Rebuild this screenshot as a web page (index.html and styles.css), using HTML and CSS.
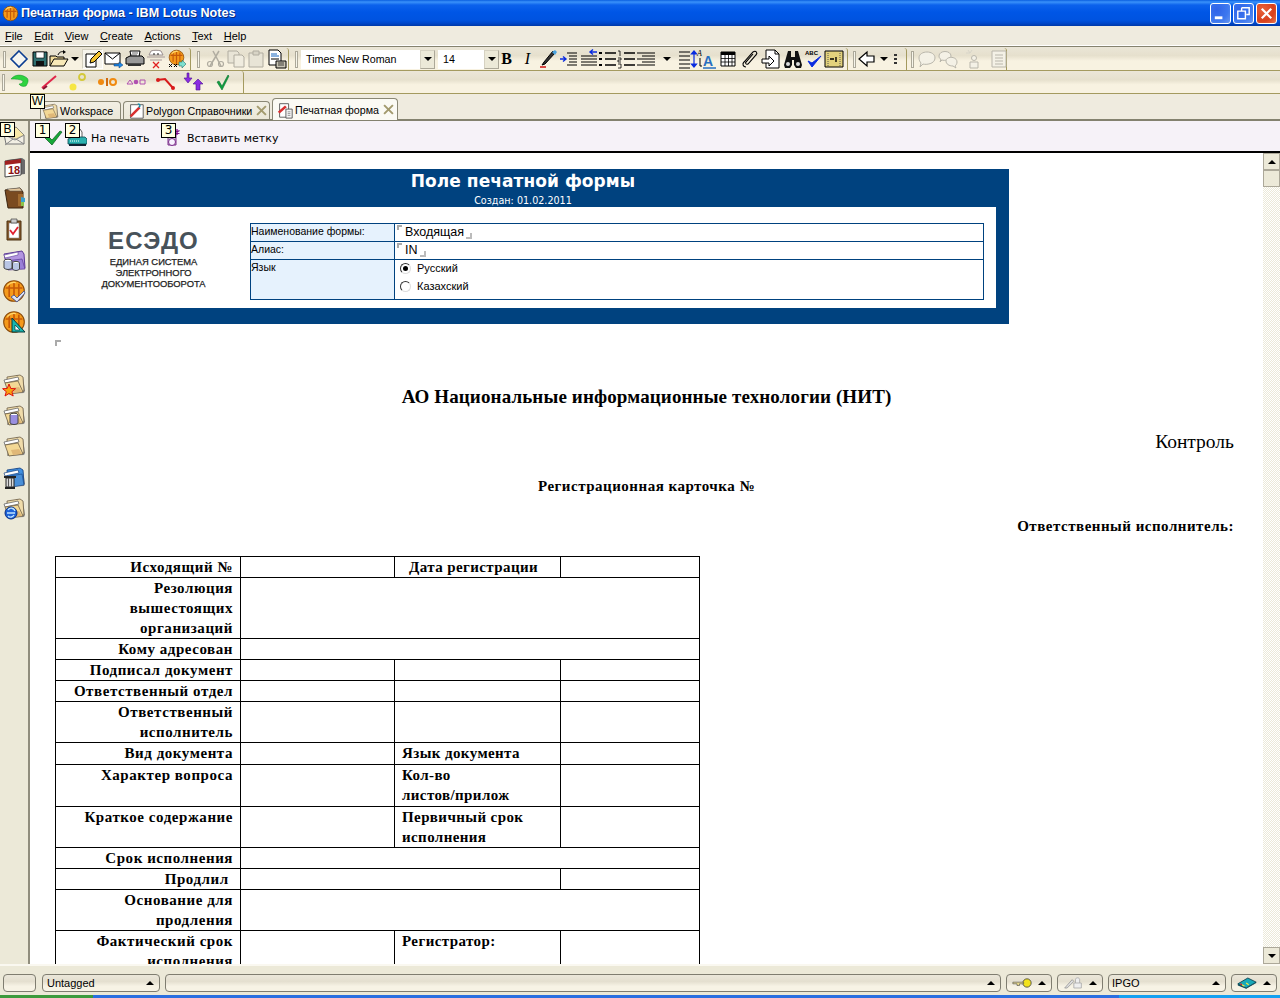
FILE: index.html
```html
<!DOCTYPE html>
<html lang="ru">
<head>
<meta charset="utf-8">
<title>Печатная форма - IBM Lotus Notes</title>
<link rel="stylesheet" href="styles.css">
</head>
<body>
<svg class="defs" aria-hidden="true">
  <symbol id="globe" viewBox="0 0 20 20">
    <circle cx="10" cy="10" r="8.6" fill="#f59a1b" stroke="#8a4a08" stroke-width=".9"/>
    <path d="M3 7.5h14M6 4v11M10 2.5v15M14 4v11" stroke="#c65a08" stroke-width="1.4" fill="none"/>
    <path d="M4.5 5.5a7 7 0 0 1 7-2.5" stroke="#ffd66b" stroke-width="1.2" fill="none"/>
  </symbol>
  <symbol id="folder" viewBox="0 0 24 24">
    <path d="M5 22l17-1 1-2-2-14-6-2-3 2z" fill="#8b8b8b"/>
    <path d="M5 5l13-2 3 2 1 14-16 2z" fill="#f0dcaa" stroke="#6f6048" stroke-width=".8"/>
    <path d="M2 8l14-3 1 3-14 3z" fill="#fff" stroke="#555" stroke-width=".7"/>
    <path d="M3 11l13-2 5 11-14 2z" fill="#f3d895" stroke="#6f6048" stroke-width=".8"/>
    <path d="M9 16l8-1 3 5-9 1z" fill="#e0b878"/>
  </symbol>
  <symbol id="check" viewBox="0 0 20 20">
    <path d="M2 10l3-2 4 4 8-9 2 1-10 13z" fill="#17a83a" stroke="#0a5a1e" stroke-width=".7"/>
  </symbol>
</svg>

<div class="window">
  <header class="titlebar">
    <svg class="ti-globe"><use href="#globe"/></svg>
    <span class="title">Печатная форма - IBM Lotus Notes</span>
    <span class="winbtns">
      <span class="winbtn"><svg viewBox="0 0 20 20"><path d="M4 13h8v3H4z" fill="#fff"/></svg></span>
      <span class="winbtn"><svg viewBox="0 0 20 20"><path d="M8 4h8v7h-3M8 4v3M4 7.500h8v8H4z" fill="none" stroke="#fff" stroke-width="1.500"/></svg></span>
      <span class="winbtn close"><svg viewBox="0 0 20 20"><path d="M5 5l10 10M15 5L5 15" stroke="#fff" stroke-width="2.300"/></svg></span>
    </span>
  </header>

  <nav class="menubar">
    <span class="m"><u>F</u>ile</span><span class="m"><u>E</u>dit</span><span class="m"><u>V</u>iew</span><span class="m"><u>C</u>reate</span><span class="m"><u>A</u>ctions</span><span class="m"><u>T</u>ext</span><span class="m"><u>H</u>elp</span>
  </nav>

  <div class="toolrow first">
    <div class="group g1">
      <i class="grip"></i>
      <span class="ib w21"><svg viewBox="0 0 20 20"><path d="M10 2l8 8-8 8-8-8z" fill="#f5f5f0" stroke="#0b3d91" stroke-width="1.600"/></svg></span>
      <span class="ib w21"><svg viewBox="0 0 20 20"><path d="M3 3h14v14H3z" fill="#2f6f6f" stroke="#000"/><path d="M6 3h8v6H6z" fill="#fff" stroke="#000" stroke-width=".6"/><path d="M6 12h8v5H6z" fill="#111"/></svg></span>
      <span class="ib w18"><svg viewBox="0 0 20 20"><path d="M1 17V7h6l1 1h7v2" fill="#f3dd9b" stroke="#000"/><path d="M1 17l4-7h14l-4 7z" fill="#f8e9b8" stroke="#000"/><path d="M9 6c1-3 4-4 6-3" fill="none" stroke="#000"/><path d="M14 1l3 2-3 2z"/></svg></span>
      <span class="ib arrow w14"><b class="tri"></b></span>
      <span class="ib w21 pressed"><svg viewBox="0 0 20 20"><path d="M3 5h10v13H3z" fill="#fff" stroke="#000"/><path d="M7 14l1-4 8-8 3 3-8 8z" fill="#f4c430" stroke="#000"/></svg></span>
      <span class="ib w21"><svg viewBox="0 0 20 20"><path d="M1 4h15v11H1z" fill="#fff" stroke="#000"/><path d="M1 4l7.500 6L16 4" fill="none" stroke="#000"/><path d="M10 15h5v-2l4 3-4 3v-2h-5z" fill="#1e88e5" stroke="#0a3a7a" stroke-width=".5"/></svg></span>
      <span class="ib w21"><svg viewBox="0 0 20 20"><path d="M5 2h10l-1 6H6z" fill="#fff" stroke="#000"/><path d="M1 9l4-2h12l2 2v6H1z" fill="#999" stroke="#000"/><path d="M3 15h13v2H3z" fill="#333"/><path d="M7 4h6M6 6h6" stroke="#000" stroke-width=".6"/></svg></span>
      <span class="ib w21"><svg viewBox="0 0 20 20"><path d="M5 2c2-1 8-1 10 0l2 4H3z" fill="#fff" stroke="#9a8f8f"/><path d="M1 8h18M4 11h12" stroke="#a89a9a"/><circle cx="8" cy="5" r=".8"/><circle cx="12" cy="5" r=".8"/><path d="M7 13l6 6M13 13l-6 6" stroke="#e02020" stroke-width="1.300"/></svg></span>
      <span class="ib w21"><svg viewBox="0 0 20 20"><use href="#globe" width="17" height="17" x="1"/><path d="M2 15l3 3M5 15l-3 3M7 15l3 3M10 15l-3 3" stroke="#000"/><path d="M12 13h3v-2l4 4-4 4v-2h-3z" fill="#7fe0d0" stroke="#0a5a5a" stroke-width=".5"/></svg></span>
    </div>
    <div class="group g2">
      <i class="grip"></i>
      <span class="ib w20"><svg viewBox="0 0 20 20"><path d="M4 17L13 2M15 17L7 2" stroke="#b0aca0" stroke-width="1.500"/><circle cx="4" cy="15" r="2.500" fill="none" stroke="#b0aca0" stroke-width="1.200"/><circle cx="15" cy="15" r="2.500" fill="none" stroke="#b0aca0" stroke-width="1.200"/></svg></span>
      <span class="ib w20"><svg viewBox="0 0 20 20"><path d="M2 2h9l2 2v10H2z" fill="#e8e4d6" stroke="#b0aca0"/><path d="M8 6h8l2 2v10H8z" fill="#f0ecdf" stroke="#b0aca0"/></svg></span>
      <span class="ib w20"><svg viewBox="0 0 20 20"><path d="M3 4h14v14H3z" fill="#e8e4d6" stroke="#b0aca0"/><path d="M7 2h6v4H7z" fill="#d8d4c6" stroke="#b0aca0"/></svg></span>
      <span class="ib w22"><svg viewBox="0 0 20 20"><path d="M2 1h9l3 3v12H2z" fill="#fff" stroke="#000"/><path d="M4 5h6M4 7h8" stroke="#1565c0"/><path d="M4 10h8" stroke="#000"/><path d="M9 12h10v7H9z" fill="#c9c5b6" stroke="#000"/><path d="M11 14h6M11 16h6" stroke="#000" stroke-width=".7"/></svg></span>
    </div>
    <div class="group g3">
      <i class="grip"></i>
      <span class="combo c-font"><span class="val">Times New Roman</span><span class="drop"><b class="tri"></b></span></span>
      <span class="combo c-size"><span class="val">14</span><span class="drop"><b class="tri"></b></span></span>
      <span class="ib w21 serif-b">B</span>
      <span class="ib w21 serif-i">I</span>
      <span class="ib w20"><svg viewBox="0 0 20 20"><path d="M6 13l-2 3 3-1 10-11-2-2z" fill="#333" stroke="#000"/><path d="M14 3l3-2 2 2-2 3z" fill="#4aa3df"/><path d="M2 18h6" stroke="#d01010" stroke-width="1.500"/></svg></span>
      <span class="ib w21"><svg viewBox="0 0 20 20"><path d="M8 4h10M10 7h8M10 10h8M10 13h8M8 16h10" stroke="#000" stroke-width="1.200"/><path d="M1 10h5M4 7.500l3 2.500-3 2.500" fill="none" stroke="#0a2be0" stroke-width="1.400"/></svg></span>
      <span class="ib w19"><svg viewBox="0 0 20 20"><path d="M2 7h16M2 10h16M2 13h16M2 16h16" stroke="#000" stroke-width="1.200"/><path d="M18 3h-7M14 .5L11 3l3 2.500" fill="none" stroke="#0a2be0" stroke-width="1.400"/></svg></span>
      <span class="ib w18"><svg viewBox="0 0 20 20"><path d="M8 4h11M8 10h11M8 16h11" stroke="#000" stroke-width="1.300"/><path d="M2 3h3v2H2zM2 9h3v2H2zM2 15h3v2H2z"/></svg></span>
      <span class="ib w19"><svg viewBox="0 0 20 20"><path d="M8 4h11M8 10h11M8 16h11" stroke="#000" stroke-width="1.300"/><path d="M2 2h2v5M2 9h3v2H2v2h3M2 15h3v4H2" fill="none" stroke="#000" stroke-width=".8"/></svg></span>
      <span class="ib w21"><svg viewBox="0 0 20 20"><path d="M1 4h18M6 7h13M1 10h18M6 13h13M1 16h18" stroke="#000" stroke-width="1.200"/></svg></span>
      <span class="ib w22 arrow"><b class="tri"></b></span>
      <span class="ib w19"><svg viewBox="0 0 20 20"><path d="M1 3h11M1 7h11M1 11h11M1 15h11M1 19h11" stroke="#000" stroke-width="1.200"/><path d="M16 3v14M13.500 5L16 2l2.500 3zM13.500 15l2.500 3 2.500-3z" fill="#0a2be0" stroke="#0a2be0" stroke-width="1.200"/></svg></span>
      <span class="ib w20"><svg viewBox="0 0 20 20"><text class="mini-a" x="0" y="7">A</text><text class="big-a" x="6" y="17">A</text><path d="M6 19h13" stroke="#2a6fc0" stroke-width="1.500"/><path d="M3 9v8h2" fill="none" stroke="#000"/></svg></span>
      <span class="ib w22"><svg viewBox="0 0 20 20"><path d="M3 3h14v14H3z" fill="#fff" stroke="#000"/><path d="M3 3h14v3H3z"/><path d="M3 9.500h14M3 13h14M7 3v14M10.500 3v14M14 3v14" stroke="#000" stroke-width=".8"/></svg></span>
      <span class="ib w21"><svg viewBox="0 0 20 20"><path d="M6 18c-3 0-4-3-2-5l9-10c3-2 5 1 3 3l-8 9c-2 1-3-1-2-2l7-8" fill="none" stroke="#000" stroke-width="1.100"/></svg></span>
      <span class="ib w22"><svg viewBox="0 0 20 20"><path d="M5 1h9l4 4v14H5z" fill="#fff" stroke="#000"/><path d="M14 1v4h4" fill="none" stroke="#000"/><path d="M1 10h7V7l5 5-5 5v-3H1z" fill="#fff" stroke="#000"/></svg></span>
      <span class="ib w21"><svg viewBox="0 0 20 20"><path d="M5 2h3v6h4V2h3l4 14-1 3h-5l-2-3V11H9v5l-2 3H2l-1-3z" fill="#111"/><circle cx="5" cy="15" r="2" fill="#ddd"/><circle cx="15" cy="15" r="2" fill="#ddd"/></svg></span>
      <span class="ib w21"><svg viewBox="0 0 20 20"><text class="abc" x="1" y="6">ABC</text><path d="M4 12l4 6L17 7l-9 7z" fill="#0a2be0" stroke="#0a2be0"/></svg></span>
      <span class="ib w19"><svg viewBox="0 0 20 20"><path d="M1 2h18v16H1z" fill="#e3d27c" stroke="#000"/><path d="M4 2v16M16 2v16" stroke="#555" stroke-dasharray="1 1"/><path d="M6 10h4M12 8v5" stroke="#000" stroke-width="1.400"/></svg></span>
    </div>
    <div class="group g4">
      <i class="grip"></i>
      <span class="ib w22 first-ib"><svg viewBox="0 0 20 20"><path d="M2 10l8-7v4h7v6h-7v4z" fill="#fff" stroke="#000" stroke-width="1.200"/></svg></span>
      <span class="ib w12 arrow"><b class="tri"></b></span>
      <span class="ib w10 dots"><b></b><b></b><b></b></span>
    </div>
    <div class="group g5">
      <i class="grip"></i>
      <span class="ib w21"><svg viewBox="0 0 20 20"><path d="M2 9c0-8 16-8 16 0 0 6-9 7-12 6l-3 3 1-4c-1-1-2-3-2-5z" fill="#f4f1e6" stroke="#b9b6ab"/></svg></span>
      <span class="ib w21"><svg viewBox="0 0 20 20"><path d="M1 7c0-6 12-6 12 0 0 4-7 5-9 4l-2 2 1-3c-1 0-2-1-2-3z" fill="#f4f1e6" stroke="#b9b6ab"/><path d="M8 12c0-5 11-5 11 1 0 2-1 3-2 4l1 2-3-2c-4 0-7-2-7-5z" fill="#f4f1e6" stroke="#b9b6ab"/></svg></span>
      <span class="ib w31"><svg viewBox="0 0 20 20"><circle cx="10" cy="9" r="2.500" fill="#f4f1e6" stroke="#b9b6ab"/><path d="M6 19v-6h8v6z" fill="#f4f1e6" stroke="#b9b6ab"/><path d="M4 1l2 3M8 1L6 4M2 4h4" stroke="#d8d5c9"/></svg></span>
      <span class="ib w20"><svg viewBox="0 0 20 20"><path d="M3 2h14v16H3z" fill="#f4f1e6" stroke="#b9b6ab"/><path d="M6 6h8M6 9h8M6 12h8M6 15h8" stroke="#b9b6ab"/></svg></span>
    </div>
    <div class="rest"></div>
  </div>

  <div class="toolrow second">
    <div class="group g-act">
      <i class="grip"></i>
      <span class="ib w29"><svg viewBox="0 0 20 20"><path d="M1 7c4-5 11-5 16-1 2 2 1 5-1 8-3 1-6 0-7-2 2 0 4-1 4-3-3-2-7-2-12-2z" fill="#2fd33f" stroke="#0b8f2a" stroke-width=".5"/></svg></span>
      <span class="ib w29"><svg viewBox="0 0 20 20"><path d="M3 16L17 4" stroke="#e0264a" stroke-width="2"/><path d="M4 17l4-3" stroke="#8a1030" stroke-width="2"/></svg></span>
      <span class="ib w29"><svg viewBox="0 0 20 20"><circle cx="5" cy="15" r="3.500" fill="#f6e644"/><circle cx="14" cy="5" r="3" fill="none" stroke="#d4c93a" stroke-width="1.800"/></svg></span>
      <span class="ib w29"><svg viewBox="0 0 20 20"><circle cx="4" cy="10" r="3" fill="#f08a10"/><path d="M9 6h2v8H9z" fill="#d06b10"/><circle cx="16" cy="10" r="3" fill="none" stroke="#f08a10" stroke-width="2"/></svg></span>
      <span class="ib w29"><svg viewBox="0 0 20 20"><path d="M1 12l3-4 3 4z" fill="none" stroke="#b050b0"/><circle cx="10" cy="10" r="2.300" fill="#b050b0"/><path d="M14 8h5v4h-5z" fill="none" stroke="#b050b0"/></svg></span>
      <span class="ib w29"><svg viewBox="0 0 20 20"><path d="M2 8l8-1 8 9" fill="none" stroke="#d81b1b" stroke-width="2"/><circle cx="3" cy="8" r="2" fill="#d81b1b"/><circle cx="18" cy="16" r="2" fill="#d81b1b"/></svg></span>
      <span class="ib w29"><svg viewBox="0 0 20 20"><path d="M5 1v5h3l-4 5-4-5h3V1zM12 18v-6H9l5-5 5 5h-3v6z" fill="#8a2be2" stroke="#4a1090" stroke-width=".6"/></svg></span>
      <span class="ib w29"><svg viewBox="0 0 20 20"><path d="M4 10l2-1 3 5 6-11 1 1-7 14z" fill="#10a040" stroke="#0a7030" stroke-width=".6"/></svg></span>
    </div>
    <div class="rest"></div>
  </div>

  <div class="tabstrip">
    <span class="tip tip-w">W</span>
    <div class="tab t-work"><svg class="tab-ico"><use href="#folder"/></svg><span>Workspace</span></div>
    <div class="tab t-poly"><svg class="tab-ico" viewBox="0 0 20 20"><path d="M4 3h14v15H4z" fill="#fff" stroke="#555"/><path d="M3 15L13 5l2 2L5 17z" fill="#d83030"/><path d="M12 2c3 0 3 3 1 4" fill="none" stroke="#1090b0" stroke-width="1.500"/></svg><span>Polygon Справочники</span><svg class="x" viewBox="0 0 10 10"><path d="M1 1l8 8M9 1l-8 8"/></svg></div>
    <div class="tab t-form"><svg class="tab-ico" viewBox="0 0 20 20"><path d="M4 3h10v15H4z" fill="#fff" stroke="#555"/><path d="M2 12L10 5l2 2-8 7z" fill="#d83030"/><path d="M11 9h7v10h-7z" fill="#f4f4f4" stroke="#555"/><path d="M13 12h3M13 14h3M13 16h3" stroke="#666" stroke-width=".7"/></svg><span>Печатная форма</span><svg class="x" viewBox="0 0 10 10"><path d="M1 1l8 8M9 1l-8 8"/></svg></div>
  </div>

  <div class="middle">
    <aside class="rail">
      <span class="tip tip-b">B</span>
      <span class="ri"><svg viewBox="0 0 24 24"><path d="M2 10L14 3l8 8v9H4z" fill="#f2efe4" stroke="#777"/><path d="M3 11l10 5 9-5M3 21l8-6M22 20l-8-5" fill="none" stroke="#888"/><path d="M14 3l8 8-8 4-9-4z" fill="#f8e9a8" stroke="#777" stroke-width=".6"/></svg></span>
      <span class="ri"><svg viewBox="0 0 24 24"><path d="M4 21l19-2V5L20 3 5 5z" fill="#6a6a6a"/><path d="M3 6l16-2v16L3 22z" fill="#fff" stroke="#444"/><path d="M3 6l16-2v4L3 10z" fill="#a02020"/><text class="cal" x="6" y="19">18</text></svg></span>
      <span class="ri"><svg viewBox="0 0 24 24"><path d="M3 4l15-2 3 4v16H6z" fill="#7a4a20" stroke="#3a2410"/><path d="M5 3l13-1 2 3H8z" fill="#e4c69a" stroke="#555" stroke-width=".5"/><path d="M16 8h5v12h-5z" fill="#a06a30"/><path d="M19 11l4 1v4l-4 1z" fill="#38a0d0"/><path d="M19 16h3v4h-3z" fill="#8bc34a"/></svg></span>
      <span class="ri"><svg viewBox="0 0 24 24"><path d="M5 4h14v19H5z" fill="#8a5a2a" stroke="#4a3010"/><path d="M7 6h10v15H7z" fill="#fff" stroke="#777" stroke-width=".5"/><path d="M9 2h6v4H9z" fill="#ccc" stroke="#444" stroke-width=".7"/><path d="M8 13l3 4 5-7" fill="none" stroke="#e02030" stroke-width="1.800"/></svg></span>
      <span class="ri"><svg viewBox="0 0 24 24"><path d="M2 6l18-3 2 3 1 14H5z" fill="#b295e0" stroke="#5b3a96"/><path d="M2 7l14-3v3L3 10z" fill="#fff" stroke="#5b3a96" stroke-width=".6"/><path d="M4 13l16-2 3 10-17 1z" fill="#9a80d8" stroke="#5b3a96" stroke-width=".7"/><ellipse cx="6" cy="13" rx="4" ry="1.800" fill="#fff" stroke="#444"/><path d="M2 13v7c2 2 6 2 8 0v-7" fill="#b9c6e5" stroke="#444"/><ellipse cx="14" cy="15" rx="3.500" ry="1.600" fill="#fff" stroke="#444"/><path d="M10.500 15v6c2 2 5 2 7 0v-6" fill="#b9c6e5" stroke="#444"/></svg></span>
      <span class="ri"><svg viewBox="0 0 24 24"><use href="#globe" width="24" height="24"/><path d="M9 18l3-2 3 3 7-7 1 2-8 9z" fill="#dce3f4" stroke="#3a4a8a" stroke-width=".8"/></svg></span>
      <span class="ri"><svg viewBox="0 0 24 24"><use href="#globe" width="24" height="24"/><path d="M10 8l13 14H10z" fill="#19b6b0" stroke="#083a3a"/><path d="M13 15l5 5h-5z" fill="#fff" stroke="#083a3a" stroke-width=".7"/></svg></span>
      <span class="rail-gap"></span>
      <span class="ri"><svg viewBox="0 0 24 24"><use href="#folder"/><path d="M7 12l1.800 4.500 4.800.2-3.700 3 1.300 4.300-4.200-2.500L3 24l1.300-4.300-3.700-3 4.600-.2z" fill="#f6a310" stroke="#e01010" stroke-width="1"/></svg></span>
      <span class="ri"><svg viewBox="0 0 24 24"><use href="#folder"/><ellipse cx="12" cy="12" rx="4" ry="1.800" fill="#fff" stroke="#444"/><path d="M8 12v8c2 2 6 2 8 0v-8" fill="#9a8fe0" stroke="#444"/></svg></span>
      <span class="ri"><svg viewBox="0 0 24 24"><use href="#folder"/></svg></span>
      <span class="ri"><svg viewBox="0 0 24 24"><path d="M5 22l17-1 1-2-2-14-6-2-3 2z" fill="#8b8b8b"/><path d="M5 5l13-2 3 2 1 14-16 2z" fill="#3f8fe0" stroke="#143f80" stroke-width=".8"/><path d="M2 8l14-3 1 3-14 3z" fill="#fff" stroke="#143f80" stroke-width=".7"/><path d="M8 11l12-2 2 11-12 2z" fill="#4a90d8" stroke="#143f80" stroke-width=".6"/><path d="M2 11h12v2H2zM3 22h10v2H3z" fill="#222"/><path d="M4 13h8v9H4z" fill="#d8d8d8" stroke="#222"/><path d="M6.500 13v9M9.500 13v9" stroke="#555"/></svg></span>
      <span class="ri"><svg viewBox="0 0 24 24"><use href="#folder"/><circle cx="9" cy="17" r="6" fill="#1d62d8" stroke="#0a2e80"/><path d="M5 17h8M6 14c2-3 6-2 7 1M6 20c2 2 5 1 6-1" fill="none" stroke="#bfe3ff" stroke-width="1.300"/></svg></span>
    </aside>

    <div class="content">
      <div class="actionbar">
        <span class="act a1"><span class="tip tip-n">1</span><svg class="act-ico"><use href="#check"/></svg></span>
        <span class="act a2"><span class="tip tip-n">2</span><svg class="act-ico" viewBox="0 0 20 20"><path d="M6 1h7l2 3v6H6z" fill="#fff" stroke="#333" stroke-width=".8"/><path d="M1 11l4-2h13l2 2v5H1z" fill="#2bb0b0" stroke="#0a4a50" stroke-width=".8"/><path d="M3 13h10" stroke="#fff" stroke-dasharray="1 1"/><path d="M2 16h17v2H2z" fill="#123"/></svg><span>На печать</span></span>
        <span class="act a3"><span class="tip tip-n">3</span><svg class="act-ico" viewBox="0 0 20 20"><path d="M6 5h8v12H6z" fill="#c9c5d8" stroke="#7a2a8a"/><circle cx="10" cy="14" r="3.500" fill="#f8f2ff" stroke="#7a2a8a"/><path d="M15 1v6M12.500 2.500l5 3M17.500 2.500l-5 3" stroke="#7a0a8a" stroke-width="1.300"/></svg><span>Вставить метку</span></span>
      </div>

      <div class="docarea">
        <main class="doc">
          <section class="banner">
            <h1>Поле печатной формы</h1>
            <p class="created">Создан: 01.02.2011</p>
            <div class="panel">
              <div class="logo">
                <div class="logo-mark">ЕСЭДО</div>
                <div class="logo-sub">ЕДИНАЯ СИСТЕМА<br>ЭЛЕКТРОННОГО<br>ДОКУМЕНТООБОРОТА</div>
              </div>
              <table class="meta">
                <tr class="r1"><th>Наименование формы:</th><td><i class="mk-a"></i><span class="fv">Входящая</span><i class="mk-b"></i></td></tr>
                <tr class="r2"><th>Алиас:</th><td><i class="mk-a"></i><span class="fv">IN</span><i class="mk-b"></i></td></tr>
                <tr class="r3"><th>Язык</th><td>
                  <div class="radio on"><i class="rd"></i>Русский</div>
                  <div class="radio"><i class="rd"></i>Казахский</div>
                </td></tr>
              </table>
            </div>
          </section>
          <i class="mk-a lone"></i>
          <h2 class="org">АО Национальные информационные технологии (НИТ)</h2>
          <p class="ctrl">Контроль</p>
          <h3 class="reg">Регистрационная карточка №</h3>
          <p class="resp">Ответственный исполнитель:</p>
          <table class="card">
            <colgroup><col class="c1"><col class="c2"><col class="c3"><col class="c4"></colgroup>
            <tr class="h21"><th>Исходящий №</th><td></td><td class="lab ind">Дата регистрации</td><td></td></tr>
            <tr class="h61"><th>Резолюция вышестоящих организаций</th><td colspan="3"></td></tr>
            <tr class="h21"><th>Кому адресован</th><td colspan="3"></td></tr>
            <tr class="h21"><th>Подписал документ</th><td></td><td></td><td></td></tr>
            <tr class="h21"><th>Ответственный отдел</th><td></td><td></td><td></td></tr>
            <tr class="h41"><th>Ответственный исполнитель</th><td></td><td></td><td></td></tr>
            <tr class="h22"><th>Вид документа</th><td></td><td class="lab">Язык документа</td><td></td></tr>
            <tr class="h42"><th>Характер вопроса</th><td></td><td class="lab">Кол-во<br>листов/прилож</td><td></td></tr>
            <tr class="h41"><th>Краткое содержание</th><td></td><td class="lab">Первичный срок исполнения</td><td></td></tr>
            <tr class="h21"><th>Срок исполнения</th><td colspan="3"></td></tr>
            <tr class="h21"><th>Продлил&nbsp;</th><td colspan="2"></td><td></td></tr>
            <tr class="h41"><th>Основание для продления</th><td colspan="3"></td></tr>
            <tr class="h41"><th>Фактический срок исполнения</th><td></td><td class="lab">Регистратор:</td><td></td></tr>
          </table>
        </main>
        <div class="scrollbar">
          <span class="sb-btn"><b class="tri up"></b></span>
          <span class="sb-thumb"></span>
          <span class="sb-track"></span>
          <span class="sb-btn"><b class="tri"></b></span>
        </div>
      </div>
    </div>
  </div>

  <footer class="status">
    <span class="pill p-a"></span>
    <span class="pill p-b"><span class="pv">Untagged</span><b class="tri up"></b></span>
    <span class="pill p-c"><b class="tri up"></b></span>
    <span class="pill p-d"><svg viewBox="0 0 24 12"><circle cx="18" cy="6" r="5" fill="#f2e21a" stroke="#444"/><path d="M1 5h13v2H9v2H6V7H1z" fill="#e8d98a" stroke="#444" stroke-width=".7"/></svg><b class="tri up"></b></span>
    <span class="pill p-d"><svg viewBox="0 0 24 14"><path d="M2 13L11 3l2 2L5 13z" fill="#ddd" stroke="#999"/><path d="M13 13V7h9v6zM15 7V3c0-3 5-3 5 0v4" fill="#eee" stroke="#aaa"/></svg><b class="tri up"></b></span>
    <span class="pill p-e"><span class="pv">IPGO</span><b class="tri up"></b></span>
    <span class="pill p-d"><svg viewBox="0 0 24 14"><path d="M1 8l12-7 10 5-12 7z" fill="#19a9b8" stroke="#0a3a4a"/><path d="M1 8v2l10 4 12-7V6l-12 7z" fill="#0a4a5a"/><path d="M6 9l3 2M11 7l3 2" stroke="#f6e644" stroke-width="1.500"/><path d="M4 8l2 1" stroke="#e02020" stroke-width="1.500"/></svg><b class="tri up"></b></span>
  </footer>
  <div class="taskbar"><span class="start"></span><span class="tasks"></span><span class="task-end"></span></div>
</div>
</body>
</html>
```
FILE: styles.css
```css
* { box-sizing: border-box; }
html, body { margin: 0; padding: 0; height: 100%; }
body { font-family: "Liberation Sans", Arial, sans-serif; font-size: 11px; color: #000; overflow: hidden; background: #ece9d8; }
.defs { position: absolute; width: 0; height: 0; }
.window { width: 1280px; height: 998px; display: flex; flex-direction: column; background: #ece9d8; }
svg { display: block; }

/* title bar */
.titlebar { height: 26px; flex: none; display: flex; align-items: center; padding: 0 3px 0 2px; color: #fff;
  background: linear-gradient(#0a5fe0 0, #3a92fa 2px, #0c62ec 5px, #0056e6 12px, #0053e0 20px, #0048cc 23px, #0038a8 26px); }
.ti-globe { width: 17px; height: 17px; }
.title { margin-left: 2px; font-size: 12.600px; font-weight: bold; text-shadow: 1px 1px 0 #0a2a7a; flex: 1; }
.winbtns { display: flex; gap: 2px; }
.winbtn { width: 21px; height: 21px; border: 1px solid #fff; border-radius: 3px; background: radial-gradient(circle at 30% 30%, #2f63e8, #3d78ef 60%, #6c98f0); display: block; }
.winbtn.close { background: radial-gradient(circle at 30% 30%, #e8623a, #d8401c 60%, #e87a54); }
.winbtn svg { width: 19px; height: 19px; }

/* menu */
.menubar { height: 19px; flex: none; display: flex; align-items: center; padding-left: 5px; gap: 11.500px; background: #efebdf; }
.m u { text-decoration: underline; }

/* toolbars */
.toolrow { flex: none; display: flex; border-bottom: 1px solid #a49a5f; background: linear-gradient(#ebe6d8, #e6e0cd 40%, #f8f2e1 62%, #f8f2e1); }
.toolrow.first { height: 26px; border-top: 1px solid #fff; box-shadow: inset 0 1px 0 #85826f; padding-top: 2px; }
.toolrow.second { height: 23px; }
.rest { flex: 1; }
.group { display: flex; align-items: center; height: 100%; border-right: 1px solid #a49a5f; padding-left: 3px; border-top-right-radius: 3px; }
.grip { width: 3px; height: 17px; margin-right: 5px; border: 1px solid #aca899; background: #f7f5ea; flex: none; }
.g1 { width: 191px; }
.g1 .grip { margin-right: 2px; }
.g2 { width: 98px; }
.g2 .grip { margin-left: 3px; margin-right: 6px; }
.g3 { width: 559px; }
.g3 .grip { margin-left: 3px; margin-right: 3px; }
.g4 { width: 59px; }
.g4 .grip { margin-left: 2px; margin-right: 0; }
.g5 { width: 100px; }
.g5 .grip { margin-left: 1px; margin-right: 2px; }
.g-act { width: 244px; }
.g-act .grip { margin-right: 0; margin-left: -1px; }
.ib { height: 20px; display: flex; align-items: center; justify-content: center; flex: none; }
.ib svg { width: 20px; height: 20px; overflow: visible; flex: none; }
.w10 { width: 10px; } .w12 { width: 12px; } .w14 { width: 14px; } .w18 { width: 18px; } .w19 { width: 19px; } .w20 { width: 20px; }
.w21 { width: 21px; } .w22 { width: 22px; } .w29 { width: 29px; } .w31 { width: 31px; }
.pressed { background: #f6f4ec; border: 1px solid #d4d0c0; border-right-color: #fff; border-bottom-color: #fff; }
.tri { display: block; width: 0; height: 0; border-left: 4px solid transparent; border-right: 4px solid transparent; border-top: 4px solid #000; }
.tri.up { border-top: 0; border-bottom: 4px solid #000; }
.dots { flex-direction: column; gap: 2px; }
.dots b { width: 3px; height: 2px; background: #333; display: block; }
.combo { display: flex; height: 19px; background: #fff; flex: none; }
.c-font { width: 134px; margin-right: 3px; }
.c-size { width: 61px; margin-right: -3px; }
.val { flex: 1; font-size: 10.700px; line-height: 19px; padding-left: 5px; white-space: nowrap; }
.drop { width: 15px; display: flex; align-items: center; justify-content: center; background: #ece9d8; border: 1px solid #d6d2c2; border-right-color: #aca899; border-bottom-color: #aca899; }
.serif-b { font: bold 16px "Liberation Serif", serif; }
.serif-i { font: italic 16px "Liberation Serif", serif; }
.mini-a { font: italic 8px "Liberation Serif", serif; }
.big-a { font: bold 14px "Liberation Sans", sans-serif; fill: #2a6fc0; }
.abc { font: bold 6px "Liberation Sans", sans-serif; }
.cal { font: bold 11px "Liberation Sans", sans-serif; fill: #8a1010; }

/* tabs */
.tabstrip { position: relative; flex: none; height: 27px; display: flex; align-items: flex-end; padding-left: 40px; gap: 2px; background: #efebdf; border-bottom: 2px solid #84826f; }
.tab { height: 18px; display: flex; align-items: center; border: 1px solid #8a8775; border-bottom: 0; border-radius: 4px 4px 0 0; background: linear-gradient(#f2efe4, #ebe7d8); padding-left: 3px; white-space: nowrap; font-size: 10.700px; }
.tab-ico { width: 18px; height: 18px; flex: none; margin-right: 1px; }
.tab .x { width: 11px; height: 11px; margin-left: 4px; flex: none; }
.tab .x path { fill: none; stroke: #a39a6e; stroke-width: 1.800; }
.t-work { width: 81px; padding-left: 0; }
.t-poly { width: 147px; }
.t-form { width: 126px; height: 22px; margin-bottom: -1px; background: #fbfaf4; position: relative; z-index: 1; }

/* key tips */
.tip { position: absolute; z-index: 3; background: #ffffe1; border: 1px solid #000; width: 15px; height: 15px; font-size: 12px; line-height: 13px; text-align: center; color: #000; }
.tip-w { left: 30px; top: 0; }
.tip-b { left: 0; top: 1px; }
.tip-n { left: 0; top: 2px; }

/* middle */
.middle { flex: 1; min-height: 0; display: flex; }
.rail { position: relative; width: 30px; flex: none; display: flex; flex-direction: column; align-items: center; padding-top: 3px; gap: 7px; background: #ece9d8; border-right: 2px solid #908d7d; }
.ri { display: block; width: 24px; height: 24px; flex: none; }
.ri svg { width: 24px; height: 24px; overflow: visible; }
.rail-gap { height: 24px; flex: none; }
.content { flex: 1; min-width: 0; display: flex; flex-direction: column; }

.actionbar { position: relative; height: 32px; flex: none; background: #f6f2f8; border-bottom: 2px solid #000; font-family: "DejaVu Sans", sans-serif; font-size: 11px; }
.act { position: absolute; top: 0; display: flex; align-items: center; height: 30px; padding-top: 4px; }
.act span:not(.tip) { margin-left: 3px; }
.act-ico { width: 20px; height: 20px; margin-left: 8px; flex: none; }
.a1 { left: 5px; }
.a2 { left: 35px; }
.a2 .act-ico { margin-left: 2px; margin-right: 1px; }
.a3 { left: 131px; }
.a3 .act-ico { margin-left: 1px; margin-right: 2px; }

/* document */
.docarea { flex: 1; min-height: 0; display: flex; }
.doc { flex: 1; min-width: 0; overflow: hidden; background: #fff; padding: 16px 0 0 8px; font-family: "Liberation Serif", "Times New Roman", serif; }
.banner { width: 971px; height: 155px; background: #00427f; padding: 1px 13px 16px 12px; display: flex; flex-direction: column; }
.banner h1 { margin: 0; height: 23px; text-align: center; color: #fff; font: bold 17px/23px "DejaVu Sans", sans-serif; letter-spacing: .06px; }
.created { margin: 0; height: 14px; text-align: center; color: #fff; font: 9.600px/15px "DejaVu Sans", sans-serif; }
.panel { flex: 1; background: #fff; display: flex; align-items: flex-start; padding-top: 16px; }
.logo { width: 200px; flex: none; text-align: center; color: #222; padding-top: 7px; padding-left: 7px; }
.logo-mark { font: bold 24px/21px "Liberation Sans", sans-serif; color: #47525a; letter-spacing: 1.100px; }
.logo-sub { font: 9.400px/11px "Liberation Sans", sans-serif; margin-top: 5px; -webkit-text-stroke: .25px #222; }
.meta { width: 734px; height: 77px; border-collapse: collapse; font-family: "Liberation Sans", sans-serif; font-size: 11px; table-layout: fixed; }
.meta th, .meta td { border: 1px solid #00427f; padding: 0; vertical-align: top; text-align: left; font-weight: normal; }
.meta th { width: 144px; background: #e6f2fd; line-height: 15px; font-size: 10.500px; }
.meta .r1 { height: 18px; }
.meta .r2 { height: 18px; }
.meta td { padding-left: 2px; }
.fv { font-size: 12.500px; line-height: 15px; display: inline-block; margin: 1px 0 0 3px; vertical-align: top; }
.mk-a { display: inline-block; width: 5px; height: 5px; border-left: 2px solid #aaa; border-top: 2px solid #aaa; vertical-align: top; margin-top: 1px; }
.mk-b { display: inline-block; width: 6px; height: 6px; border-right: 2px solid #bbb; border-bottom: 2px solid #bbb; margin-left: 2px; vertical-align: top; margin-top: 9px; }
.lone { display: block; margin: 16px 0 0 17px; height: 6px; width: 6px; }
.radio { height: 18px; display: flex; align-items: center; padding-left: 3px; gap: 6px; font-size: 11px; }
.radio:first-child { margin-top: -1px; }
.rd { width: 11px; height: 11px; border-radius: 50%; border: 1px solid #333; border-bottom-color: #ddd; border-right-color: #ddd; background: #fff; flex: none; display: flex; align-items: center; justify-content: center; }
.radio.on .rd::after { content: ""; width: 5px; height: 5px; background: #000; border-radius: 50%; }
.org { margin: 41px 0 0 -8px; text-align: center; font-size: 19px; line-height: 20px; font-weight: bold; letter-spacing: .12px; }
.ctrl { margin: 25px 29px 0 0; text-align: right; font-size: 19.500px; line-height: 20px; }
.reg { margin: 24px 0 0 -8px; text-align: center; font-size: 15px; line-height: 20px; font-weight: bold; letter-spacing: .5px; }
.resp { margin: 20px 29px 0 0; text-align: right; font-size: 15px; line-height: 20px; font-weight: bold; letter-spacing: .5px; }
.card { margin: 20px 0 0 17px; width: 644px; border-collapse: collapse; table-layout: fixed; font-size: 15px; line-height: 20px; font-weight: bold; }
.c1 { width: 185px; } .c2 { width: 154px; } .c3 { width: 166px; } .c4 { width: 139px; }
.card th, .card td { border: 1px solid #000; padding: 0; vertical-align: top; }
.card th { text-align: right; padding-right: 7px; padding-left: 4px; letter-spacing: .55px; }
.lab { padding-left: 7px !important; text-align: left; letter-spacing: .4px; }
.ind { padding-left: 14px !important; }
.h21 { height: 21px; } .h22 { height: 22px; } .h41 { height: 41px; } .h42 { height: 42px; } .h61 { height: 61px; }

/* scrollbar */
.scrollbar { width: 17px; flex: none; display: flex; flex-direction: column; }
.sb-btn { height: 17px; flex: none; background: #ece9d8; border: 1px solid #aca899; display: flex; align-items: center; justify-content: center; }
.sb-thumb { height: 17px; flex: none; background: #ece9d8; border: 1px solid #aca899; }
.sb-track { flex: 1; background: conic-gradient(#ece9d8 25%, #fff 0 50%, #ece9d8 0 75%, #fff 0) 0 0 / 2px 2px; }

/* status */
.status { height: 31px; flex: none; display: flex; gap: 5px; align-items: flex-end; padding: 0 3px 3px; border-top: 2px solid #faf8f0; background: #ece9d8; }
.pill { height: 18px; display: flex; align-items: center; justify-content: flex-end; gap: 6px; border: 1px solid #7f7d70; border-radius: 4px; background: linear-gradient(#ebe7da, #e4dfcf 40%, #f7f3e5 70%); padding-right: 5px; padding-left: 3px; }
.pill svg { width: 24px; height: 14px; margin-right: auto; margin-left: 2px; }
.pv { margin-right: auto; font-size: 11px; }
.p-a { width: 33px; }
.p-b { width: 118px; margin-left: 1px; padding-left: 4px; }
.p-c { flex: 1; }
.p-d { width: 46px; }
.p-e { width: 118px; }

.taskbar { height: 3px; flex: none; display: flex; }
.start { width: 93px; background: #3c9a3c; }
.tasks { flex: 1; background: #2a6fe0; }
.task-end { width: 161px; background: #14a0f0; }
```
